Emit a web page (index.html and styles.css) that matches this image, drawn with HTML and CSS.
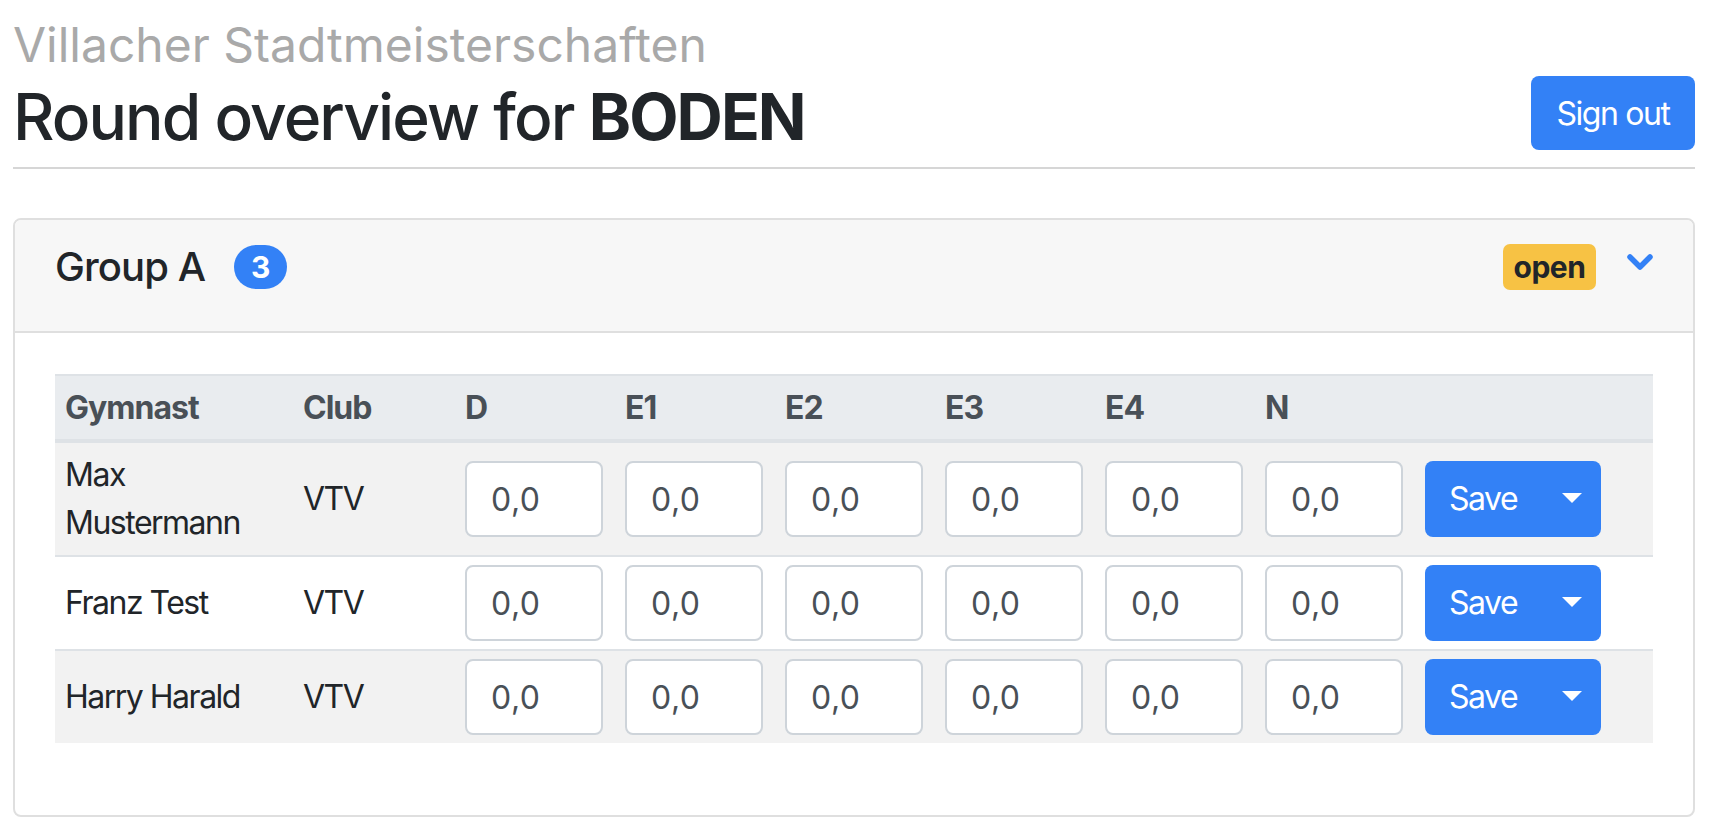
FILE: index.html
```html
<!DOCTYPE html>
<html lang="en">
<head>
<meta charset="utf-8">
<title>Round overview for BODEN</title>
<link rel="stylesheet" href="styles.css">
</head>
<body>
<div class="page">
  <header class="page-header">
    <div class="heading">
      <h4 class="subtitle">Villacher Stadtmeisterschaften</h4>
      <h2 class="title">Round overview for <b>BODEN</b></h2>
    </div>
    <button class="btn btn-primary signout">Sign out</button>
  </header>

  <section class="card">
    <div class="card-header">
      <div class="group-title">
        <h5 class="group-name">Group A</h5>
        <span class="badge badge-pill">3</span>
      </div>
      <div class="group-status">
        <span class="badge badge-warning">open</span>
        <svg class="chevron" width="26" height="18" viewBox="0 0 26 18"><polyline points="3,3 13,13 23,3" fill="none" stroke="#3381f6" stroke-width="5.5" stroke-linecap="round" stroke-linejoin="round"/></svg>
      </div>
    </div>
    <div class="card-body">
      <table class="scores">
        <colgroup>
          <col class="c-name"><col class="c-club">
          <col class="c-score"><col class="c-score"><col class="c-score">
          <col class="c-score"><col class="c-score"><col class="c-score">
          <col class="c-action">
        </colgroup>
        <thead>
          <tr><th>Gymnast</th><th>Club</th><th>D</th><th>E1</th><th>E2</th><th>E3</th><th>E4</th><th>N</th><th></th></tr>
        </thead>
        <tbody>
          <tr>
            <td>Max Mustermann</td><td>VTV</td>
            <td><input class="score" value="0,0"></td><td><input class="score" value="0,0"></td><td><input class="score" value="0,0"></td>
            <td><input class="score" value="0,0"></td><td><input class="score" value="0,0"></td><td><input class="score" value="0,0"></td>
            <td><div class="save-group"><span class="save">Save</span><span class="toggle"><span class="caret"></span></span></div></td>
          </tr>
          <tr>
            <td>Franz Test</td><td>VTV</td>
            <td><input class="score" value="0,0"></td><td><input class="score" value="0,0"></td><td><input class="score" value="0,0"></td>
            <td><input class="score" value="0,0"></td><td><input class="score" value="0,0"></td><td><input class="score" value="0,0"></td>
            <td><div class="save-group"><span class="save">Save</span><span class="toggle"><span class="caret"></span></span></div></td>
          </tr>
          <tr>
            <td>Harry Harald</td><td>VTV</td>
            <td><input class="score" value="0,0"></td><td><input class="score" value="0,0"></td><td><input class="score" value="0,0"></td>
            <td><input class="score" value="0,0"></td><td><input class="score" value="0,0"></td><td><input class="score" value="0,0"></td>
            <td><div class="save-group"><span class="save">Save</span><span class="toggle"><span class="caret"></span></span></div></td>
          </tr>
        </tbody>
      </table>
    </div>
  </section>
</div>
</body>
</html>
```

FILE: styles.css
```css
* { box-sizing: border-box; }
html, body { margin: 0; background: #fff; }
body {
  font-family: Inter, "Helvetica Neue", Arial, sans-serif;
  font-size: 32px;
  line-height: 48px;
  color: #212529;
}
.page { width: 1682px; margin-left: 13px; }

.page-header {
  display: flex;
  justify-content: space-between;
  align-items: flex-end;
  padding-top: 16px;
  padding-bottom: 12px;
  border-bottom: 2px solid #d6d6d6;
}
.subtitle {
  margin: 0 0 5px;
  font-size: 48px;
  line-height: 57px;
  font-weight: 400;
  color: #a9a9a9;
}
.title {
  margin: 0;
  font-size: 64px;
  line-height: 77px;
  font-weight: 500;
  letter-spacing: -1.9px;
  color: #212529;
}
.title b { font-weight: 700; }

.btn {
  font-family: inherit;
  font-size: 32px;
  border: none;
  border-radius: 8px;
  cursor: pointer;
}
.btn-primary { background: #3381f6; color: #fff; }
.signout {
  width: 164px;
  height: 74px;
  padding: 0;
  margin-bottom: 5px;
  letter-spacing: -1.4px;
  text-align: center;
}

.card {
  margin-top: 49px;
  border: 2px solid #dfdfdf;
  border-radius: 8px;
  overflow: hidden;
}
.card-header {
  display: flex;
  justify-content: space-between;
  align-items: center;
  padding: 23px 40px 40px;
  background: #f7f7f7;
  border-bottom: 2px solid #dfdfdf;
}
.group-title { display: flex; align-items: center; }
.group-name {
  margin: 0;
  font-size: 40px;
  line-height: 48px;
  font-weight: 500;
  letter-spacing: -0.9px;
}
.badge {
  display: inline-block;
  font-size: 30px;
  font-weight: 700;
  text-align: center;
}
.badge-pill {
  margin-left: 29px;
  width: 53px;
  height: 44px;
  line-height: 44px;
  border-radius: 22px;
  background: #3381f6;
  color: #fff;
}
.group-status { display: flex; align-items: center; }
.badge-warning {
  width: 93px;
  height: 46px;
  line-height: 46px;
  letter-spacing: -0.5px;
  border-radius: 7px;
  background: #f7c244;
  color: #212529;
}
.chevron { margin-left: 31px; margin-bottom: 9px; display: block; }

.card-body { padding: 41px 40px 40px; }
.scores {
  width: 1598px;
  table-layout: fixed;
  border-collapse: collapse;
  margin-bottom: 32px;
}
.c-name { width: 238px; }
.c-club { width: 162px; }
.c-score { width: 160px; }
.c-action { width: 238px; }

.scores th {
  text-align: left;
  font-weight: 700;
  letter-spacing: -1px;
  color: #495057;
  background: #e9ecef;
  padding: 8px 10px 7px;
  border-top: 2px solid #dee2e6;
  border-bottom: 4px solid #dee2e6;
}
.scores td {
  padding: 8px 10px;
  vertical-align: middle;
  letter-spacing: -1.5px;
  border-top: 2px solid #dee2e6;
}
.scores tbody tr:nth-child(odd) { background: #f2f2f2; }

.score {
  display: block;
  width: 138px;
  height: 76px;
  padding: 0 24px;
  border: 2px solid #ced4da;
  border-radius: 8px;
  background: #fff;
  font-family: inherit;
  font-size: 32px;
  letter-spacing: 0.5px;
  color: #495057;
}

.save-group {
  display: flex;
  width: 176px;
  height: 76px;
  border-radius: 8px;
  background: #3381f6;
  color: #fff;
}
.save {
  width: 118px;
  padding-left: 24px;
  line-height: 76px;
}
.toggle {
  width: 58px;
  display: flex;
  align-items: center;
  justify-content: center;
}
.caret {
  width: 0;
  height: 0;
  border-top: 10px solid #fff;
  border-left: 10px solid transparent;
  border-right: 10px solid transparent;
  margin-bottom: 3px;
}
```
